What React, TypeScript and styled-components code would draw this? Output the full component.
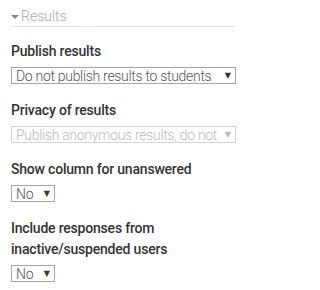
import React from 'react';
import styled, { createGlobalStyle } from 'styled-components';

const GlobalStyle = createGlobalStyle`
  body {
    margin: 0;
    background: #fff;
    font-family: Roboto, "Open Sans", Arial, sans-serif;
  }
`;

const fields = [
  { label: 'Publish results', value: 'Do not publish results to students', wide: true },
  { label: 'Privacy of results', value: 'Publish anonymous results, do not', wide: true, disabled: true },
  { label: 'Show column for unanswered', value: 'No' },
  { label: 'Include responses from inactive/suspended users', value: 'No' },
];

const App = () => (
  <>
    <GlobalStyle />
    <Container>
      <Legend>
        <Caret />
        Results
      </Legend>
      <FieldList>
        {fields.map((f) => (
          <Field key={f.label}>
            <Label>{f.label}</Label>
            <SelectBox $wide={f.wide} $disabled={f.disabled}>
              <SelectText>{f.value}</SelectText>
              <Arrow $disabled={f.disabled}>▼</Arrow>
            </SelectBox>
          </Field>
        ))}
      </FieldList>
    </Container>
  </>
);

const Container = styled.div`
  width: 224px;
  padding: 7px 0 0 11px;
`;

const Legend = styled.div`
  display: flex;
  align-items: center;
  height: 19px;
  line-height: 19px;
  font-size: 14px;
  font-weight: 300;
  color: #aaa;
  border-bottom: 1px solid #e3e3e3;
`;

const Caret = styled.span`
  width: 0;
  height: 0;
  margin: 1px 2px 0 0;
  border-left: 4px solid transparent;
  border-right: 4px solid transparent;
  border-top: 4px solid #888;
`;

const FieldList = styled.div`
  display: flex;
  flex-direction: column;
  gap: 16px;
  padding-top: 14px;
`;

const Field = styled.div`
  display: flex;
  flex-direction: column;
  align-items: flex-start;
  gap: 5px;
`;

const Label = styled.div`
  font-size: 14px;
  font-weight: 500;
  line-height: 21px;
  letter-spacing: -0.2px;
  color: #333;
  width: 200px;
`;

const SelectBox = styled.div<{ $wide?: boolean; $disabled?: boolean }>`
  display: flex;
  align-items: center;
  box-sizing: border-box;
  width: ${(p) => (p.$wide ? '225px' : '44px')};
  height: 17px;
  padding: 0 4px;
  border: 1px solid ${(p) => (p.$disabled ? '#d4d4d4' : '#a6a6a6')};
  color: ${(p) => (p.$disabled ? '#bbb' : '#555')};
  overflow: hidden;
`;

const SelectText = styled.span`
  flex: 1;
  font-size: 14px;
  font-weight: 300;
  letter-spacing: -0.3px;
  white-space: nowrap;
  overflow: hidden;
`;

const Arrow = styled.span<{ $disabled?: boolean }>`
  font-size: 8px;
  margin-left: 4px;
  color: ${(p) => (p.$disabled ? '#bbb' : '#333')};
  font-family: "DejaVu Sans", sans-serif;
`;

export default App;
